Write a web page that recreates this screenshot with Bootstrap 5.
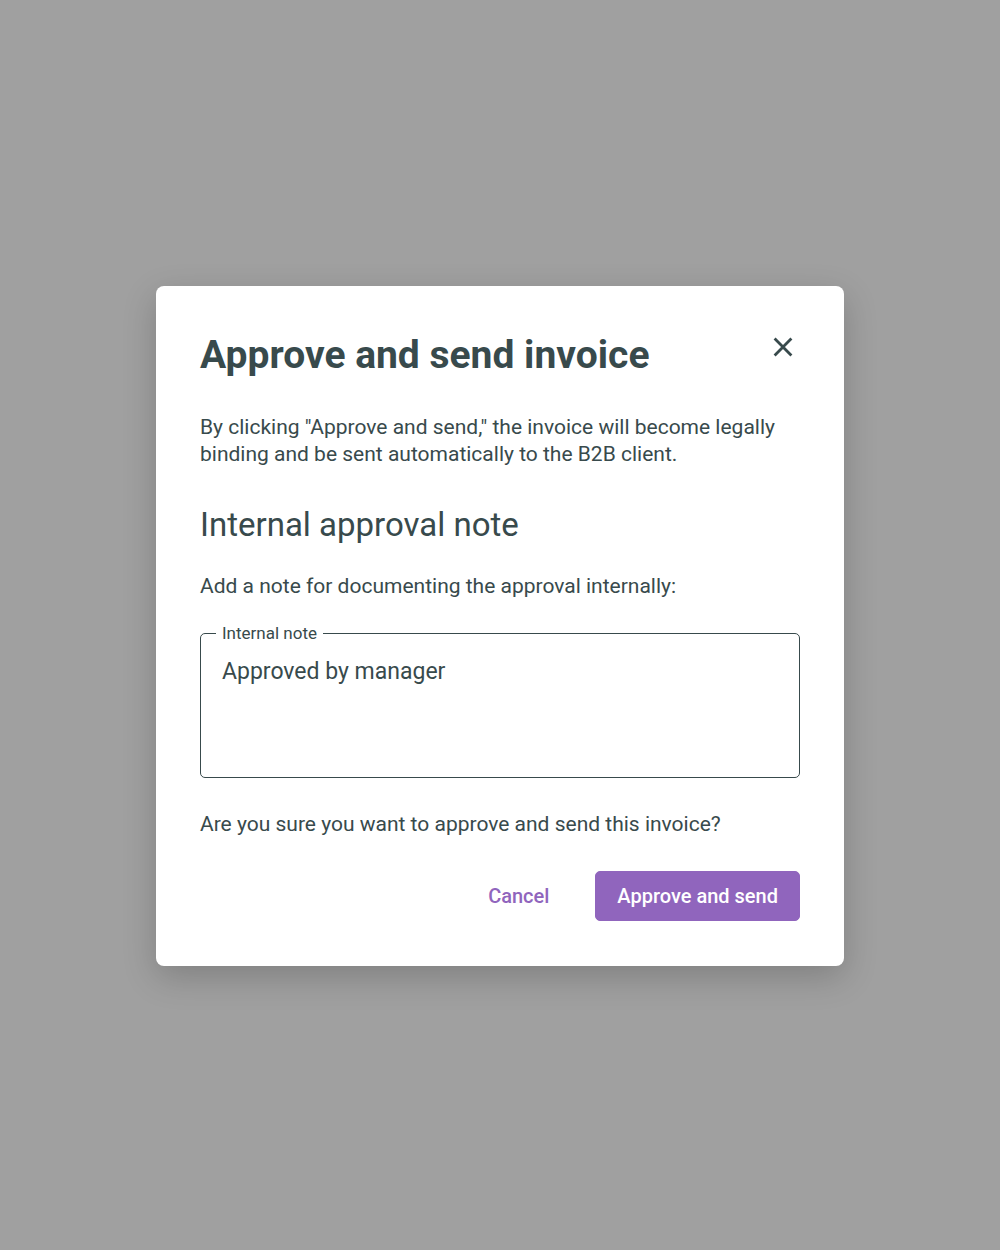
<!DOCTYPE html>
<html lang="en">
<head>
<meta charset="utf-8">
<meta name="viewport" content="width=device-width, initial-scale=1">
<title>Approve and send invoice</title>
<link href="https://cdn.jsdelivr.net/npm/bootstrap@5.3.0/dist/css/bootstrap.min.css" rel="stylesheet">
<style>
  :root { --ink: #384a4c; --accent: #9065bd; }
  body { background: #a0a0a0; color: var(--ink); font-family: Roboto, "Open Sans", sans-serif; font-size: 21px; line-height: 27px; }
  .page-area { padding: 26px 16px 24px; }
  .approve-dialog { max-width: 688px; padding: 44px 44px 45px; border-radius: 8px; box-shadow: 0 11px 34px rgba(0, 0, 0, .2); }
  .approve-stack { gap: 33px; }
  .dialog-title { font-size: 39px; line-height: 51px; font-weight: 700; }
  .section-title { font-size: 33px; line-height: 48px; font-weight: 400; margin-bottom: 24px; }
  .close-btn { width: 34px; height: 34px; color: var(--ink); }
  .note-label { top: -12px; left: 16px; padding: 0 6px; font-size: 17px; line-height: 24px; }
  .note-input { height: 145px; padding: 23px 21px; border: 1px solid var(--ink); border-radius: 5px; color: var(--ink); font-size: 23px; line-height: 30px; resize: none; }
  .note-input:focus { border-color: var(--accent); color: var(--ink); box-shadow: none; }
  .action-btn { --bs-btn-padding-x: 21px; --bs-btn-padding-y: 10px; --bs-btn-font-size: 20px; --bs-btn-line-height: 28px; --bs-btn-font-weight: 500; --bs-btn-border-radius: 5px; --bs-btn-color: #fff; --bs-btn-bg: var(--accent); --bs-btn-border-color: var(--accent); --bs-btn-hover-color: #fff; --bs-btn-hover-bg: #7d52aa; }
  .action-plain { --bs-btn-color: var(--accent); --bs-btn-bg: transparent; --bs-btn-border-color: transparent; --bs-btn-hover-color: #fff; }
</style>
<script src="https://cdn.jsdelivr.net/npm/bootstrap@5.3.0/dist/js/bootstrap.bundle.min.js" defer></script>
</head>
<body>
<main class="page-area min-vh-100 d-flex align-items-center justify-content-center">
  <section class="approve-dialog bg-white w-100" role="dialog" aria-modal="true" aria-labelledby="dialogTitle">
    <form class="approve-stack d-flex flex-column">
      <header class="d-flex justify-content-between align-items-start">
        <h1 class="dialog-title mb-0" id="dialogTitle">Approve and send invoice</h1>
        <button type="button" class="close-btn btn border-0 p-0 d-flex align-items-center justify-content-center" aria-label="Close">
          <svg width="20" height="20" viewBox="0 0 20 20" fill="none" stroke="currentColor" stroke-width="2.8" aria-hidden="true"><path d="M1.6 1.6 18.4 18.4M18.4 1.6 1.6 18.4"/></svg>
        </button>
      </header>
      <p class="mb-0">By clicking "Approve and send," the invoice will become legally binding and be sent automatically to the B2B client.</p>
      <div>
        <h2 class="section-title">Internal approval note</h2>
        <p class="mb-0">Add a note for documenting the approval internally:</p>
      </div>
      <div class="position-relative">
        <label class="note-label position-absolute bg-white" for="note">Internal note</label>
        <textarea class="note-input form-control" id="note">Approved by manager</textarea>
      </div>
      <p class="mb-0">Are you sure you want to approve and send this invoice?</p>
      <footer class="d-flex justify-content-end gap-4">
        <button type="button" class="action-btn action-plain btn">Cancel</button>
        <button type="submit" class="action-btn btn">Approve and send</button>
      </footer>
    </form>
  </section>
</main>
</body>
</html>
